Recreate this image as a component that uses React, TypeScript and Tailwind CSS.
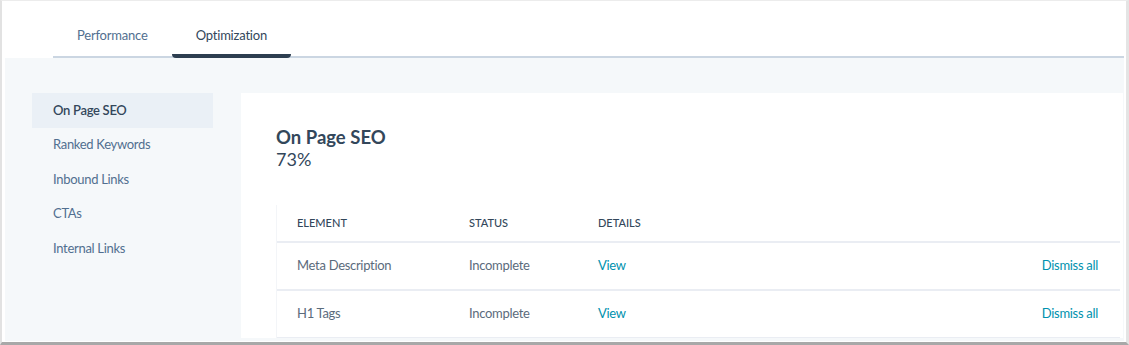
const NAV = ['On Page SEO', 'Ranked Keywords', 'Inbound Links', 'CTAs', 'Internal Links'];

const ROWS = [
  { element: 'Meta Description', status: 'Incomplete' },
  { element: 'H1 Tags', status: 'Incomplete' },
];

export default function App() {
  return (
    <div
      className="w-[1129px] h-[345px] overflow-hidden bg-white border-l-2 border-t border-r-[3px] border-b-[3px] border-l-[#e2e2e2] border-t-[#ececec] border-r-[#e4e4e4] border-b-[#a8a8a8]"
      style={{ fontFamily: 'Lato, "Open Sans", sans-serif' }}
    >
      <div className="flex flex-col h-full pl-[3px] pr-[2px] pb-[1px]">
        {/* tabs */}
        <div className="h-[57px] shrink-0 flex items-end pl-[48px] bg-white">
          <div className="flex flex-1 border-b-2 border-[#cbd6e2]">
            <button
              type="button"
              className="px-6 h-[55px] -mb-[2px] flex items-center pt-[14px] text-[13px] tracking-[-0.2px] text-[#516f90] border-b-4 border-transparent"
            >
              Performance
            </button>
            <button
              type="button"
              className="px-6 h-[55px] -mb-[2px] flex items-center pt-[14px] text-[13px] tracking-[-0.2px] text-[#33475b] border-b-4 border-[#2d3e50] rounded-sm"
            >
              Optimization
            </button>
          </div>
        </div>

        {/* body */}
        <div className="flex-1 bg-[#f5f8fa] flex gap-[28px] pl-[27px] pt-[35px] pr-[1px] pb-[3px] min-h-0">
          <nav className="w-[181px] shrink-0 flex flex-col">
            {NAV.map((item, i) => (
              <a
                key={item}
                href="#"
                className={`h-[34.5px] flex items-center pl-[21px] text-[13px] tracking-[-0.3px] ${
                  i === 0 ? 'bg-[#eaf0f6] text-[#33475b] font-semibold' : 'text-[#516f90]'
                }`}
              >
                {item}
              </a>
            ))}
          </nav>

          <main className="flex-1 bg-white pl-[35px] pr-[3px] pt-[33px] overflow-hidden">
            <h1 className="text-[18.5px] leading-[22px] font-bold text-[#33475b]">On Page SEO</h1>
            <p className="text-[18px] leading-[22px] text-[#33475b]">73%</p>

            <div className="mt-[35px] border-l border-[#f3f5f8]">
              <div className="grid grid-cols-[192px_129px_1fr_auto] items-center h-[38px] border-b-2 border-[#eaedf3] text-[11px] font-medium uppercase text-[#33475b]">
                <span className="pl-[20px]">Element</span>
                <span>Status</span>
                <span>Details</span>
                <span />
              </div>
              {ROWS.map((row) => (
                <div
                  key={row.element}
                  className="grid grid-cols-[192px_129px_1fr_auto] items-center h-[48px] border-b-2 border-[#eaedf3] text-[13px] tracking-[-0.3px]"
                >
                  <span className="pl-[20px] text-[#5b6b7c]">{row.element}</span>
                  <span className="text-[#5b6b7c]">{row.status}</span>
                  <a href="#" className="text-[#0091ae]">
                    View
                  </a>
                  <a href="#" className="pr-[22px] text-[#0091ae]">
                    Dismiss all
                  </a>
                </div>
              ))}
            </div>
          </main>
        </div>
      </div>
    </div>
  );
}
